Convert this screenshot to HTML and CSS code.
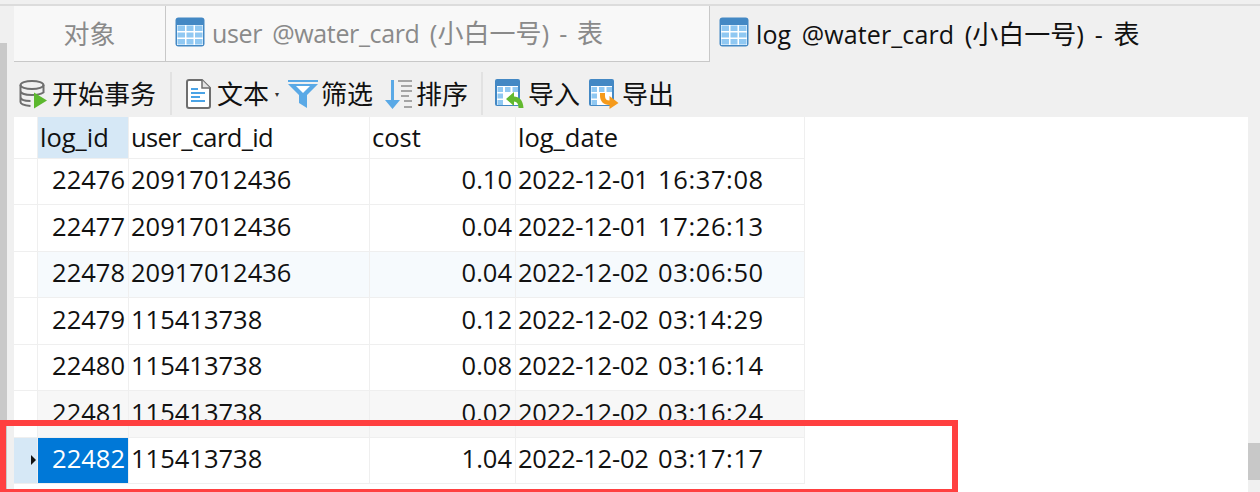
FILE: index.html
```html
<!DOCTYPE html>
<html lang="zh">
<head>
<meta charset="utf-8">
<title>log @water_card</title>
<link rel="stylesheet" href="styles.css">
</head>
<body>
<svg class="defs" width="0" height="0" aria-hidden="true">
  <symbol id="tbl" viewBox="0 0 30 30">
    <rect x="0.5" y="0.5" width="29" height="29" rx="3" fill="#4388c4"/>
    <rect x="2" y="8" width="26" height="20" fill="#fff"/>
    <g fill="#90c8f2">
      <rect x="2.500" y="8.500" width="7.500" height="5.500"/><rect x="11.500" y="8.500" width="7" height="5.500"/><rect x="20" y="8.500" width="7.500" height="5.500"/>
      <rect x="2.500" y="15.500" width="7.500" height="5"/><rect x="11.500" y="15.500" width="7" height="5"/><rect x="20" y="15.500" width="7.500" height="5"/>
      <rect x="2.500" y="22" width="7.500" height="5.500"/><rect x="11.500" y="22" width="7" height="5.500"/><rect x="20" y="22" width="7.500" height="5.500"/>
    </g>
  </symbol>
  <symbol id="tbl-small" viewBox="0 0 26 28">
    <rect x="0" y="0" width="25" height="27" rx="2" fill="#4388c4"/>
    <rect x="2" y="7" width="21" height="19" fill="#fff"/>
    <g fill="#90c8f2">
      <rect x="2.500" y="8" width="5.500" height="5"/><rect x="10" y="8" width="5.500" height="5"/><rect x="17.500" y="8" width="5.500" height="5"/>
      <rect x="2.500" y="14.500" width="5.500" height="5"/><rect x="2.500" y="21" width="5.500" height="5"/>
    </g>
  </symbol>
</svg>
<div class="side"></div>
<main class="app">
  <div class="topline"></div>
  <nav class="tabs">
    <div class="tab first">对象</div>
    <div class="tab second"><svg class="tab-icon"><use href="#tbl"/></svg><span class="title">user @water_card <span class="cjk">(小白一号)</span> - <span class="cjk">表</span></span></div>
    <div class="tab active"><svg class="tab-icon"><use href="#tbl"/></svg><span class="title">log @water_card <span class="cjk">(小白一号)</span> - <span class="cjk">表</span></span></div>
  </nav>
  <div class="toolbar">
    <div class="tool begin">
      <svg class="ico" width="28" height="30" viewBox="0 0 28 30"><g fill="none" stroke="#6e6e6e" stroke-width="2"><ellipse cx="13" cy="6" rx="11.500" ry="4"/><path d="M1.500 6v17c0 2 4 3.500 10 4M24.500 6v8M1.500 12c0 2.500 5 4 11.500 4 4 0 8-.5 11.500-2.500M1.500 18c0 2.500 4 4 10 4"/></g><path d="M15 13.500l13 8-13 8z" fill="#5cb82e"/></svg>
      <span>开始事务</span>
    </div>
    <i class="sep"></i>
    <div class="tool text">
      <svg class="ico" width="25" height="30" viewBox="0 0 25 30"><path d="M1 3a2 2 0 0 1 2-2h13l8 8v18a2 2 0 0 1-2 2H3a2 2 0 0 1-2-2z" fill="#fff" stroke="#6e6e6e" stroke-width="2"/><path d="M16 1v8h8" fill="#e4e4e4" stroke="#6e6e6e" stroke-width="1.500"/><path d="M5 10h7M5 14h14M5 18h9M5 22h14" stroke="#4aa3e6" stroke-width="2"/></svg>
      <span>文本</span><b class="dot">▾</b>
    </div>
    <div class="tool filter">
      <svg class="ico" width="30" height="30" viewBox="0 0 30 30"><path d="M0 1h30v2H0z" fill="#5aa9e6"/><path d="M0 5h30L19 16v13l-8-5v-8z" fill="#5aa9e6"/><path d="M8 7h14l-7 7z" fill="#fff"/></svg>
      <span>筛选</span>
    </div>
    <div class="tool sort">
      <svg class="ico" width="28" height="30" viewBox="0 0 28 30"><path d="M7 1h3v20h6l-7.500 9L1 21h6z" fill="#5aa9e6"/><path d="M14 2h14M17 7h11M17 12h11M17 17h8M20 22h8M20 28h8" stroke="#8a8a8a" stroke-width="1.600"/></svg>
      <span>排序</span>
    </div>
    <i class="sep"></i>
    <div class="tool imp">
      <span class="ico-wrap"><svg width="30" height="30" viewBox="0 0 30 30"><use href="#tbl-small" width="26" height="28"/><path d="M11 20l8-7v4.500c5 .3 9 3 9.500 11.500h-5c0-4-1.500-6.200-4.500-6.500V27z" fill="#62b92f"/></svg></span>
      <span>导入</span>
    </div>
    <div class="tool exp">
      <span class="ico-wrap"><svg width="30" height="30" viewBox="0 0 30 30"><use href="#tbl-small" width="26" height="28"/><path d="M11 14h5v3c0 3 1.500 4.500 4.500 4.500V17l9 7-9 6v-4c-6 0-9.500-4-9.500-9z" fill="#f59a1b"/></svg></span>
      <span>导出</span>
    </div>
  </div>
  <section class="content">
    <div class="grid">
      <div class="row head"><i class="mark"></i><div class="cell sel">log_id</div><div class="cell"><span class="tight">user_card_id</span></div><div class="cell">cost</div><div class="cell">log_date</div></div>
      <div class="row"><i class="mark"></i><div class="cell num">22476</div><div class="cell">20917012436</div><div class="cell num">0.10</div><div class="cell"><span class="d">2022-12-01</span><span class="t">16:37:08</span></div></div>
      <div class="row"><i class="mark"></i><div class="cell num">22477</div><div class="cell">20917012436</div><div class="cell num">0.04</div><div class="cell"><span class="d">2022-12-01</span><span class="t">17:26:13</span></div></div>
      <div class="row tint-blue"><i class="mark"></i><div class="cell num">22478</div><div class="cell">20917012436</div><div class="cell num">0.04</div><div class="cell"><span class="d">2022-12-02</span><span class="t">03:06:50</span></div></div>
      <div class="row"><i class="mark"></i><div class="cell num">22479</div><div class="cell">115413738</div><div class="cell num">0.12</div><div class="cell"><span class="d">2022-12-02</span><span class="t">03:14:29</span></div></div>
      <div class="row"><i class="mark"></i><div class="cell num">22480</div><div class="cell">115413738</div><div class="cell num">0.08</div><div class="cell"><span class="d">2022-12-02</span><span class="t">03:16:14</span></div></div>
      <div class="row tint-grey"><i class="mark"></i><div class="cell num">22481</div><div class="cell">115413738</div><div class="cell num">0.02</div><div class="cell"><span class="d">2022-12-02</span><span class="t">03:16:24</span></div></div>
      <div class="row current"><i class="mark"><em class="arrow"></em></i><div class="cell num active-cell">22482</div><div class="cell">115413738</div><div class="cell num">1.04</div><div class="cell"><span class="d">2022-12-02</span><span class="t">03:17:17</span></div></div>
    </div>
    <aside class="scrollbar"><div class="thumb"></div></aside>
  </section>
</main>
<div class="redbox"></div>
</body>
</html>
```
FILE: styles.css
```css
* { box-sizing: border-box; }
html, body { margin: 0; height: 492px; overflow: hidden; }
body {
  display: flex;
  background: #f0f0f0;
  font-family: "Open Sans", "Noto Sans CJK SC", sans-serif;
  font-size: 25.5px;
  color: #111;
  width: 1260px;
}
.defs { position: absolute; }
.side {
  width: 14px;
  flex: none;
  margin-top: 43px;
  border-left: 7px solid #c9c9c9;
}
.app { flex: 1; display: flex; flex-direction: column; min-width: 0; }
.topline { height: 6px; border-bottom: 2px solid #dcdcdc; background: #f0f0f0; margin-left: -14px; }
.tabs { height: 56px; display: flex; flex: none; border-bottom: 1.5px solid #c8c8c8; }
.tab { display: flex; align-items: center; color: #8a8a8a; background: #f8f8f8; white-space: nowrap; font-size: 25px; word-spacing: 3px; }
.title { margin-left: 7px; margin-top: -3px; }
.cjk { font-size: 26px; letter-spacing: 0; }
.first { width: 152px; justify-content: center; border-right: 1.5px solid #c8c8c8; font-size: 26px; padding-bottom: 2px; }
.second { width: 544px; padding-left: 9px; border-right: 1.5px solid #c8c8c8; letter-spacing: -0.35px; word-spacing: 4px; }
.active { flex: 1; padding-left: 9px; color: #111; background: #f0f0f0; margin-bottom: -1.5px; position: relative; letter-spacing: 0.1px; word-spacing: 4px; }
.tab-icon { width: 30px; height: 30px; margin-top: -4px; flex: none; }
.toolbar { height: 55px; flex: none; display: flex; align-items: center; padding: 8px 0 0 5px; font-size: 26px; }
.tool { display: flex; align-items: center; white-space: nowrap; }
.tool span { line-height: 1; }
.begin { gap: 5px; width: 151px; }
.text { gap: 6px; margin-left: 14px; width: 102px; }
.filter { gap: 3px; width: 96px; }
.sort { gap: 4px; width: 97px; }
.imp { gap: 3px; margin-left: 12px; width: 94px; }
.exp { gap: 3px; }
.ico-wrap { display: flex; }
.dot { font-size: 8px; font-weight: normal; color: #333; margin-left: 0; }
.sep { width: 2px; height: 43px; background: #e2e2e2; flex: none; }
.content { flex: 1; display: flex; background: #fff; min-height: 0; overflow: hidden; }
.grid { width: 791px; flex: none; }
.row {
  height: 46.5px;
  display: grid;
  grid-template-columns: 24px 91px 241px 146px 1fr;
  background: #fff;
  border-bottom: 1.5px solid #efefef;
}
.head { height: 41.5px; }
.mark { display: flex; align-items: center; justify-content: center; background: #fff; border-right: 1.5px solid #efefef; padding-left: 16px; }
.cell { padding: 0 3px 3px 2px; border-right: 1.5px solid #efefef; display: flex; align-items: center; white-space: nowrap; line-height: 1; }
.head .cell { padding-bottom: 0; }
.num { justify-content: flex-end; }
.sel { background: #d6e8f6; }
.tight { letter-spacing: -0.6px; }
.d { letter-spacing: -0.25px; margin-right: 9.500px; }
.t { letter-spacing: 0.6px; }
.tint-blue { background: #f6fafd; }
.tint-grey { background: #f7f7f7; }
.tint-blue .mark, .tint-grey .mark { background: #fff; }
.current .mark { background: #d6e8f6; }
.active-cell { background: #0078d7; color: #fff; }
.arrow { width: 0; height: 0; border-left: 5px solid #111; border-top: 5px solid transparent; border-bottom: 5px solid transparent; }
.scrollbar { margin-left: auto; width: 12px; flex: none; background: #f0f0f0; padding-top: 326px; }
.thumb { height: 37px; background: #c8c8c8; }
.redbox {
  position: absolute;
  left: 0; top: 420px;
  width: 958px; height: 72px;
  border: 6px solid #ff4040;
  border-bottom-width: 3px;
  pointer-events: none;
}
```
